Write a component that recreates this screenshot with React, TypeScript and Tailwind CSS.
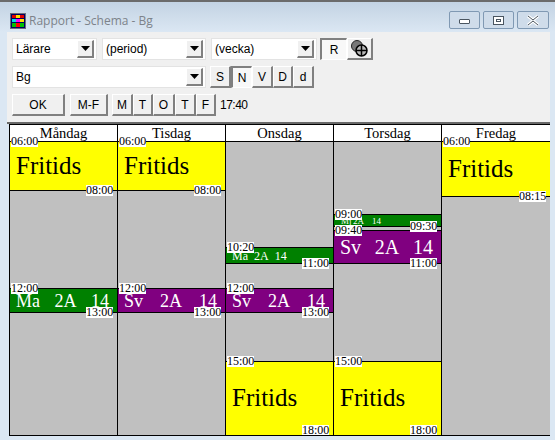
import { ReactNode } from "react";

const START_Y = 6;
const PX_PER_HOUR = 24.5;

type Lesson = {
  from: string;
  to: string;
  kind: "fritids" | "green" | "purple";
  subject?: string;
  size?: "tiny" | "small" | "mid" | "big";
  textTop?: number;
};

const days: { name: string; lessons: Lesson[] }[] = [
  {
    name: "Måndag",
    lessons: [
      { from: "06:00", to: "08:00", kind: "fritids", textTop: 9 },
      { from: "12:00", to: "13:00", kind: "green", subject: "Ma", size: "big" },
    ],
  },
  {
    name: "Tisdag",
    lessons: [
      { from: "06:00", to: "08:00", kind: "fritids", textTop: 9 },
      { from: "12:00", to: "13:00", kind: "purple", subject: "Sv", size: "big" },
    ],
  },
  {
    name: "Onsdag",
    lessons: [
      { from: "10:20", to: "11:00", kind: "green", subject: "Ma", size: "small" },
      { from: "12:00", to: "13:00", kind: "purple", subject: "Sv", size: "big" },
      { from: "15:00", to: "18:00", kind: "fritids", textTop: 21 },
    ],
  },
  {
    name: "Torsdag",
    lessons: [
      { from: "09:00", to: "09:30", kind: "green", subject: "Mj", size: "tiny" },
      { from: "09:40", to: "11:00", kind: "purple", subject: "Sv", size: "mid" },
      { from: "15:00", to: "18:00", kind: "fritids", textTop: 21 },
    ],
  },
  {
    name: "Fredag",
    lessons: [{ from: "06:00", to: "08:15", kind: "fritids", textTop: 12 }],
  },
];

const toY = (time: string) => {
  const [h, m] = time.split(":").map(Number);
  return Math.floor((h + m / 60 - START_Y) * PX_PER_HOUR);
};

function Combo({ label, className }: { label: string; className: string }) {
  return (
    <div className={`flex h-[22px] items-center border border-[#e3e3e3] bg-white pl-[3px] pr-[2px] ${className}`}>
      <span className="flex-1 text-[12px] text-black">{label}</span>
      <span className="flex h-[18px] w-[17px] items-center justify-center border-t border-r-2 border-b-2 border-l border-t-white border-r-[#808080] border-b-[#808080] border-l-white bg-[#f0f0f0]">
        <svg width="9" height="5" viewBox="0 0 9 5">
          <path d="M0 0h9L4.5 5z" fill="#000" />
        </svg>
      </span>
    </div>
  );
}

function Btn({ children, w, pressed }: { children: ReactNode; w: string; pressed?: boolean }) {
  return (
    <button
      className={`flex h-[22px] items-center justify-center text-[12px] text-black ${w} ${
        pressed
          ? "border-t-2 border-r border-b border-l-2 border-t-[#808080] border-r-white border-b-white border-l-[#808080] bg-[#f8f8f8]"
          : "border-t border-r-2 border-b-2 border-l border-t-white border-r-[#808080] border-b-[#808080] border-l-white bg-[#f0f0f0]"
      }`}
    >
      {children}
    </button>
  );
}

function TimeTag({ time, className }: { time: string; className: string }) {
  return (
    <span className={`absolute z-10 w-[27px] bg-white text-center text-[12px] text-black ${className}`}>
      {time}
    </span>
  );
}

function LessonBlock({ lesson }: { lesson: Lesson }) {
  const top = toY(lesson.from);
  const height = toY(lesson.to) - top;
  const bg =
    lesson.kind === "fritids" ? "bg-[#ffff00] text-black" : lesson.kind === "green" ? "bg-[#008000] text-white" : "bg-[#800080] text-white";

  return (
    <div className={`absolute left-0 right-0 border-y border-black ${bg}`} style={{ top: top - 1, height: height + 1 }}>
      {lesson.kind === "fritids" && (
        <div className="pl-[6px] text-[25px] leading-[30px]" style={{ marginTop: lesson.textTop }}>
          Fritids
        </div>
      )}
      {lesson.size === "big" && (
        <div className="flex h-full items-center justify-between pl-[6px] pr-[8px] text-[18px] leading-none">
          <span>{lesson.subject}</span>
          <span>2A</span>
          <span>14</span>
        </div>
      )}
      {lesson.size === "mid" && (
        <div className="flex h-full items-center justify-between pl-[6px] pr-[8px] text-[20px] leading-none">
          <span>{lesson.subject}</span>
          <span>2A</span>
          <span>14</span>
        </div>
      )}
      {lesson.size === "small" && (
        <div className="flex h-full items-center gap-[6px] pl-[6px] text-[12px] leading-none">
          <span>{lesson.subject}</span>
          <span>2A</span>
          <span>14</span>
        </div>
      )}
      {lesson.size === "tiny" && (
        <div className="flex h-full items-center overflow-hidden pl-[7px] pt-[2px] text-[9px] leading-none">
          <span className="w-[12px]">{lesson.subject}</span>
          <span className="w-[19px]">2A</span>
          <span>14</span>
        </div>
      )}
      <TimeTag time={lesson.from} className="left-[1px] top-[-6px] h-[11px] leading-[11px]" />
      <TimeTag
        time={lesson.to}
        className={lesson.to === "18:00" ? "right-[4px] bottom-0 h-[10px] leading-[10px]" : "right-[4px] bottom-[-6px] h-[11px] leading-[11px]"}
      />
    </div>
  );
}

export default function App() {
  return (
    <div className="flex h-[440px] w-[555px] flex-col overflow-hidden bg-[#dbe7f3] font-['Liberation_Sans',sans-serif]">
      {/* Title bar */}
      <div className="flex h-[32px] shrink-0 items-start justify-between border-t-2 border-[#6b6b6b] bg-gradient-to-b from-[#c3d3e3] to-[#dbe7f3] pl-[10px] pr-[6px]">
        <div className="mt-[10px] flex items-center gap-[3px]">
          <svg width="16" height="16" viewBox="0 0 16 16" shapeRendering="crispEdges">
            <rect width="16" height="16" fill="#6a6a7a" />
            <rect x="1" y="1" width="14" height="14" fill="#000060" />
            <rect x="2" y="2" width="4" height="3" fill="#e00000" />
            <rect x="6" y="2" width="4" height="3" fill="#ffe000" />
            <rect x="10" y="2" width="4" height="3" fill="#e00000" />
            <rect x="2" y="6" width="4" height="3" fill="#00e0e0" />
            <rect x="6" y="6" width="4" height="3" fill="#ff00ff" />
            <rect x="10" y="6" width="4" height="3" fill="#ffe000" />
            <rect x="2" y="10" width="4" height="4" fill="#00c000" />
            <rect x="6" y="10" width="4" height="4" fill="#ff0000" />
            <rect x="10" y="10" width="4" height="4" fill="#00c000" />
          </svg>
          <span className="font-['Open_Sans',sans-serif] text-[12px] text-[#7d838a]">Rapport - Schema - Bg</span>
        </div>
        <div className="mt-[9px] flex gap-[3px]">
          <div className="flex h-[18px] w-[31px] items-end justify-center rounded-[2px] border border-[#8099b3] bg-[#cfdcea] pb-[4px]">
            <span className="h-[5px] w-[11px] rounded-[1px] border border-[#4a5560] bg-white" />
          </div>
          <div className="flex h-[18px] w-[31px] items-center justify-center rounded-[2px] border border-[#8099b3] bg-[#cfdcea]">
            <span className="flex h-[9px] w-[11px] items-center justify-center border border-[#4a5560] bg-white">
              <span className="h-[3px] w-[5px] border border-[#4a5560]" />
            </span>
          </div>
          <div className="flex h-[18px] w-[32px] items-center justify-center rounded-[2px] border border-[#8099b3] bg-[#cfdcea]">
            <svg width="14" height="11" viewBox="0 0 14 11">
              <path d="M2 1l5 4 5-4M2 10l5-4 5 4" fill="none" stroke="#fff" strokeWidth="3" />
              <path d="M2 1l5 4 5-4M2 10l5-4 5 4" fill="none" stroke="#4a5560" strokeWidth="1" />
            </svg>
          </div>
        </div>
      </div>

      {/* Toolbar */}
      <div className="ml-[7px] mr-[5px] flex h-[92px] shrink-0 flex-col gap-[6px] border-b-2 border-[#696969] bg-[#f0f0f0] pl-[5px] pt-[6px]">
        <div className="flex items-center">
          <Combo label="Lärare" className="w-[85px]" />
          <Combo label="(period)" className="ml-[5px] w-[104px]" />
          <Combo label="(vecka)" className="ml-[5px] w-[106px]" />
          <div className="ml-[3px] flex">
            <Btn w="w-[27px]" pressed>R</Btn>
            <Btn w="w-[26px]">
              <svg width="17" height="17" viewBox="0 0 17 17">
                <circle cx="6" cy="6" r="5.5" fill="#777" stroke="#222" />
                <circle cx="10.5" cy="10.5" r="5.5" fill="#b8b8b8" stroke="#000" strokeWidth="1.5" />
                <path d="M10.5 5v11M5 10.5h11" stroke="#000" strokeWidth="1.5" />
              </svg>
            </Btn>
          </div>
        </div>
        <div className="flex items-center">
          <Combo label="Bg" className="w-[194px]" />
          <div className="ml-[4px] flex">
            <Btn w="w-[21px]">S</Btn>
            <Btn w="w-[21px]" pressed>N</Btn>
            <Btn w="w-[21px]">V</Btn>
            <Btn w="w-[20px]">D</Btn>
            <Btn w="w-[21px]">d</Btn>
          </div>
        </div>
        <div className="flex items-center">
          <Btn w="w-[53px]">OK</Btn>
          <div className="ml-[5px]">
            <Btn w="w-[38px]">M-F</Btn>
          </div>
          <div className="ml-[4px] flex">
            <Btn w="w-[21px]">M</Btn>
            <Btn w="w-[20px]">T</Btn>
            <Btn w="w-[22px]">O</Btn>
            <Btn w="w-[21px]">T</Btn>
            <Btn w="w-[20px]">F</Btn>
          </div>
          <span className="ml-[4px] text-[12px] tracking-[-0.5px] text-black">17:40</span>
        </div>
      </div>

      {/* Schedule */}
      <div className="ml-[9px] mr-[5px] flex h-[312px] shrink-0 border-y border-l border-black font-['Liberation_Serif',serif]">
        {days.map((day) => (
          <div key={day.name} className="flex w-[108px] flex-col border-r border-black last:border-r-0">
            <div className="h-[17px] shrink-0 border-b border-black bg-white text-center text-[14.5px] leading-[17px] text-black">
              {day.name}
            </div>
            <div className="relative flex-1 bg-[#c0c0c0]">
              {day.lessons.map((lesson) => (
                <LessonBlock key={lesson.from} lesson={lesson} />
              ))}
            </div>
          </div>
        ))}
      </div>
    </div>
  );
}
